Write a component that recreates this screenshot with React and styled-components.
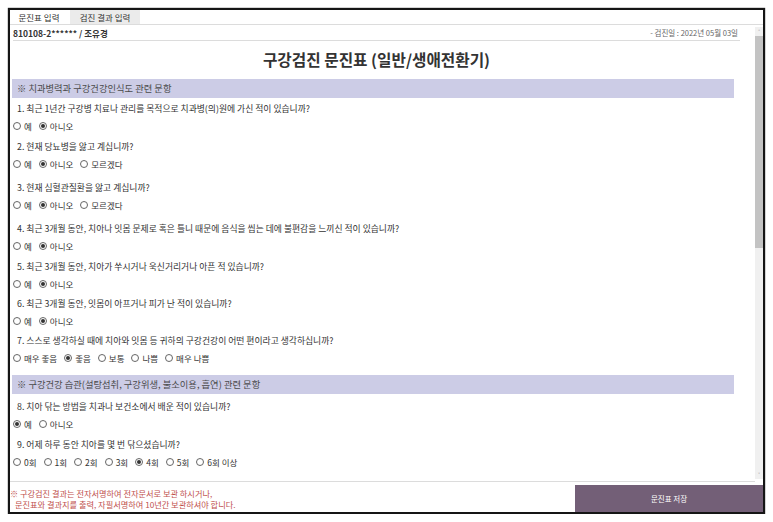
import React from 'react';
import styled, { createGlobalStyle } from 'styled-components';

const GlobalStyle = createGlobalStyle`
  html, body {
    margin: 0;
    padding: 0;
    background: #ffffff;
  }
  body {
    font-family: "Noto Sans CJK KR", "Noto Sans", sans-serif;
    color: #333333;
  }
`;

const Frame = styled.div`
  box-sizing: border-box;
  width: 757px;
  height: 506px;
  margin: 8px 0 0 8px;
  border: 2px solid #151515;
  box-shadow: 0 0 1px #000;
  display: flex;
  flex-direction: column;
  background: #ffffff;
  overflow: hidden;
`;

const TabBar = styled.div`
  display: flex;
  height: 14px;
  border-bottom: 1px solid #dcdcdc;
`;

const Tab = styled.div`
  display: flex;
  align-items: center;
  justify-content: center;
  height: 14px;
  width: ${p => p.width}px;
  margin-right: 2px;
  font-size: 8.5px;
  color: #333;
  background: ${p => (p.active ? '#ffffff' : '#ebebeb')};
`;

const Main = styled.div`
  display: flex;
  height: 456px;
`;

const Content = styled.div`
  flex: 1;
  padding: 0 15px 0 3px;
  overflow: hidden;
`;

const PatientRow = styled.div`
  display: flex;
  justify-content: space-between;
  align-items: center;
  height: 15px;
  border-bottom: 1px solid #dcdcdc;
  font-size: 8.5px;
`;

const PatientName = styled.span`
  font-weight: 700;
  color: #333;
`;

const ExamDate = styled.span`
  font-size: 7.5px;
  color: #666;
  padding-right: 2px;
`;

const Title = styled.h1`
  margin: 0;
  height: 38px;
  line-height: 38px;
  text-align: center;
  font-size: 15.7px;
  font-weight: 700;
  color: #333;
`;

const SectionHeader = styled.div`
  margin: ${p => p.top}px 6px 0 -1px;
  height: 19px;
  line-height: 19px;
  padding-left: 5px;
  background: #cccce6;
  font-size: 9.3px;
  color: #4a4a4a;
`;

const QuestionText = styled.div`
  margin-top: ${p => p.top}px;
  height: 16px;
  line-height: 16px;
  padding-left: 4px;
  font-size: 8.8px;
  color: #333;
`;

const OptionRow = styled.div`
  display: flex;
  align-items: center;
  height: 17px;
  gap: 7px;
`;

const Option = styled.label`
  display: flex;
  align-items: center;
  gap: 3px;
  font-size: 8.5px;
  color: #333;
`;

const Radio = styled.span`
  box-sizing: border-box;
  width: 8px;
  height: 8px;
  border-radius: 50%;
  border: 1px solid #666;
  display: flex;
  align-items: center;
  justify-content: center;

  &::after {
    content: '';
    width: 4px;
    height: 4px;
    border-radius: 50%;
    background: ${p => (p.checked ? '#333' : 'transparent')};
  }
`;

const ScrollBar = styled.div`
  width: 8px;
  margin-top: 2px;
  height: 452px;
  background: #f0f0f0;
  display: flex;
  flex-direction: column;
  align-items: center;
`;

const Arrow = styled.div`
  height: 9px;
  font-size: 6px;
  line-height: 9px;
  color: #777;
`;

const Thumb = styled.div`
  width: 8px;
  height: 212px;
  background: #c3c3c3;
`;

const Spacer = styled.div`
  flex: 1;
`;

const Divider = styled.div`
  height: 1px;
  background: #dcdcdc;
  margin-right: 8px;
  margin-bottom: 3px;
`;

const Footer = styled.div`
  display: flex;
  height: 27px;
`;

const Notice = styled.div`
  flex: 1;
  font-size: 8.2px;
  line-height: 11px;
  color: #c0504d;
  padding-top: 3px;

  p {
    margin: 0;
    white-space: nowrap;
  }
  p + p {
    padding-left: 5px;
  }
`;

const SaveButton = styled.button`
  width: 188px;
  height: 27px;
  border: none;
  background: #735f77;
  color: #ffffff;
  font-family: inherit;
  font-size: 7.5px;
  cursor: pointer;
`;

const blocks = [
  { type: 'section', top: 0, text: '※ 치과병력과 구강건강인식도 관련 문항' },
  {
    type: 'q', top: 3,
    text: '1. 최근 1년간 구강병 치료나 관리를 목적으로 치과병(의)원에 가신 적이 있습니까?',
    options: ['예', '아니오'], checked: 1
  },
  {
    type: 'q', top: 5,
    text: '2. 현재 당뇨병을 앓고 계십니까?',
    options: ['예', '아니오', '모르겠다'], checked: 1
  },
  {
    type: 'q', top: 8,
    text: '3. 현재 심혈관질환을 앓고 계십니까?',
    options: ['예', '아니오', '모르겠다'], checked: 1
  },
  {
    type: 'q', top: 8,
    text: '4. 최근 3개월 동안, 치아나 잇몸 문제로 혹은 틀니 때문에 음식을 씹는 데에 불편감을 느끼신 적이 있습니까?',
    options: ['예', '아니오'], checked: 1
  },
  {
    type: 'q', top: 5,
    text: '5. 최근 3개월 동안, 치아가 쑤시거나 욱신거리거나 아픈 적 있습니까?',
    options: ['예', '아니오'], checked: 1
  },
  {
    type: 'q', top: 4,
    text: '6. 최근 3개월 동안, 잇몸이 아프거나 피가 난 적이 있습니까?',
    options: ['예', '아니오'], checked: 1
  },
  {
    type: 'q', top: 4,
    text: '7. 스스로 생각하실 때에 치아와 잇몸 등 귀하의 구강건강이 어떤 편이라고 생각하십니까?',
    options: ['매우 좋음', '좋음', '보통', '나쁨', '매우 나쁨'], checked: 1
  },
  { type: 'section', top: 9, text: '※ 구강건강 습관(설탕섭취, 구강위생, 불소이용, 흡연) 관련 문항' },
  {
    type: 'q', top: 5,
    text: '8. 치아 닦는 방법을 치과나 보건소에서 배운 적이 있습니까?',
    options: ['예', '아니오'], checked: 0
  },
  {
    type: 'q', top: 5,
    text: '9. 어제 하루 동안 치아를 몇 번 닦으셨습니까?',
    options: ['0회', '1회', '2회', '3회', '4회', '5회', '6회 이상'], checked: 4
  }
];

const Question = ({ block }) => (
  <>
    <QuestionText top={block.top}>{block.text}</QuestionText>
    <OptionRow>
      {block.options.map((opt, idx) => (
        <Option key={opt}>
          <Radio checked={idx === block.checked} />
          {opt}
        </Option>
      ))}
    </OptionRow>
  </>
);

const App = () => (
  <>
    <GlobalStyle />
    <Frame>
      <TabBar>
        <Tab active width={58}>문진표 입력</Tab>
        <Tab width={70}>검진 결과 입력</Tab>
      </TabBar>

      <Main>
        <Content>
          <PatientRow>
            <PatientName>810108-2****** / 조유경</PatientName>
            <ExamDate>- 검진일 : 2022년 05월 03일</ExamDate>
          </PatientRow>
          <Title>구강검진 문진표 (일반/생애전환기)</Title>
          {blocks.map((block, idx) =>
            block.type === 'section' ? (
              <SectionHeader key={idx} top={block.top}>{block.text}</SectionHeader>
            ) : (
              <Question key={idx} block={block} />
            )
          )}
        </Content>
        <ScrollBar>
          <Arrow>˄</Arrow>
          <Thumb />
          <Spacer />
          <Arrow>˅</Arrow>
        </ScrollBar>
      </Main>

      <Divider />
      <Footer>
        <Notice>
          <p>※ 구강검진 결과는 전자서명하여 전자문서로 보관 하시거나,</p>
          <p>문진표와 결과지를 출력, 자필서명하여 10년간 보관하셔야 합니다.</p>
        </Notice>
        <SaveButton>문진표 저장</SaveButton>
      </Footer>
    </Frame>
  </>
);

export default App;
